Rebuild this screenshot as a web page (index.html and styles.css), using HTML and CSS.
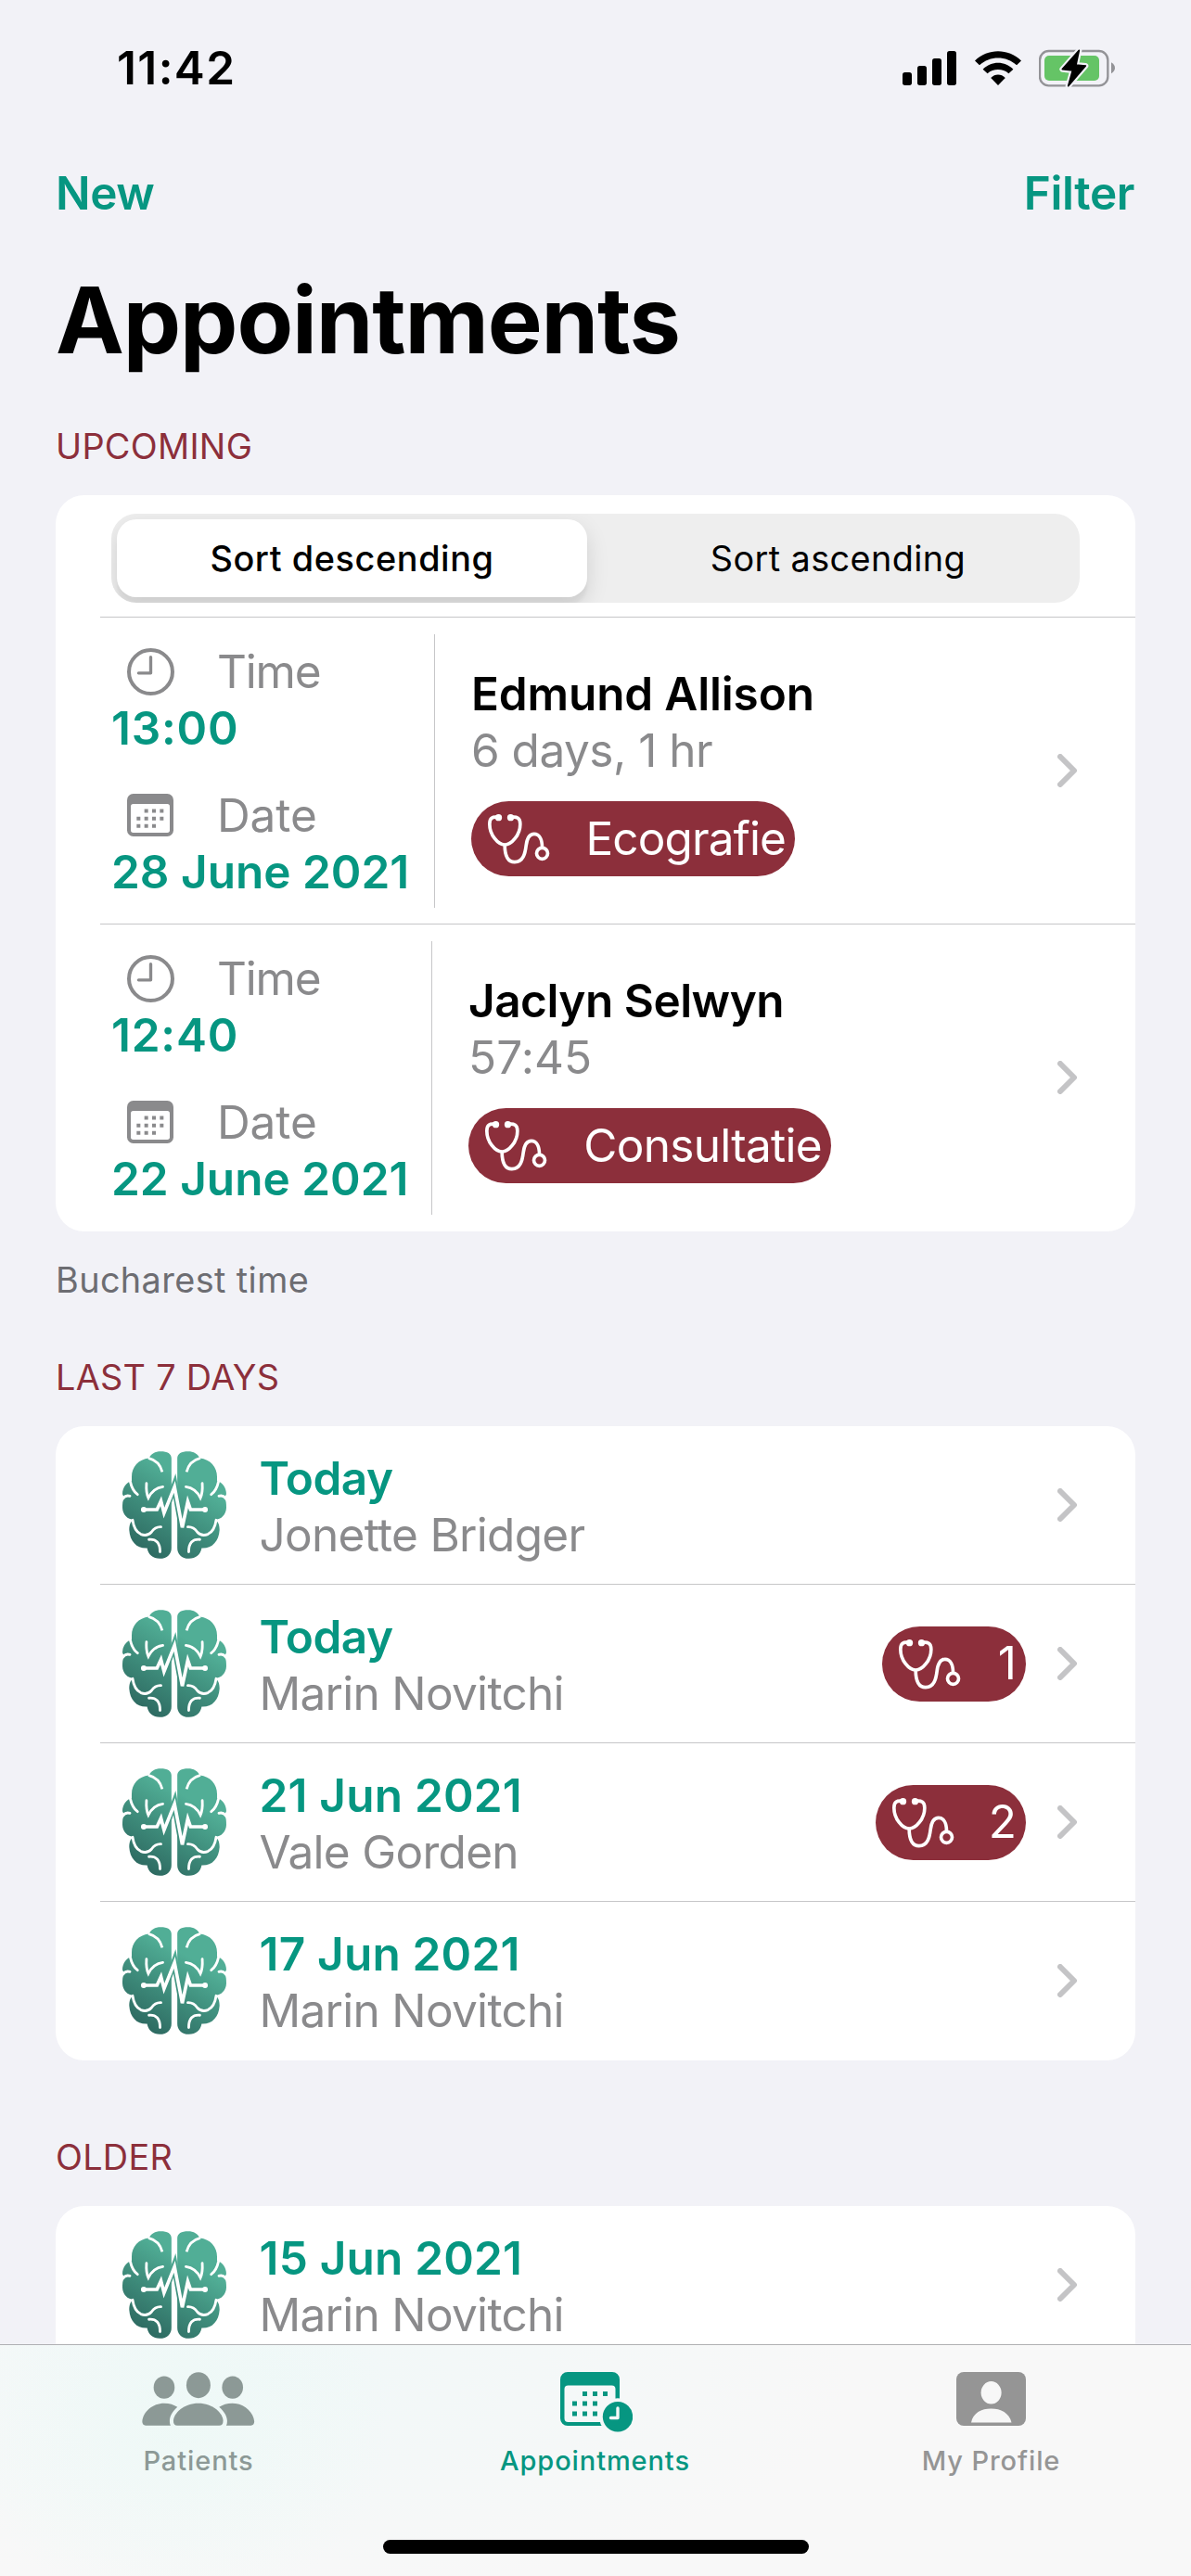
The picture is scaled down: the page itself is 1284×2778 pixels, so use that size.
FILE: index.html
```html
<!DOCTYPE html>
<html lang="en">
<head>
<meta charset="utf-8">
<title>Appointments</title>
<link rel="stylesheet" href="styles.css">
</head>
<body>
<svg class="defs" width="0" height="0" aria-hidden="true">
  <defs>
    <linearGradient id="brain-fill" gradientUnits="userSpaceOnUse" x1="140" y1="420" x2="310" y2="130">
      <stop offset="0" stop-color="#2c675f"/>
      <stop offset="0.5" stop-color="#40907e"/>
      <stop offset="0.85" stop-color="#51ae96"/>
    </linearGradient>
    <g id="brain-lines" fill="none" stroke="#fff" stroke-width="8.500" stroke-linecap="round">
      <path stroke-linecap="butt" d="M150 97Q186 106 195 142"/>
      <path d="M91 172Q98 203 115 215"/>
      <path d="M66 230Q76 215 90 220"/>
      <path d="M144 179Q142 208 150 226Q166 194 197 190"/>
      <path d="M99 298Q104 334 126 344Q146 352 160 337Q172 319 191 320"/>
      <path d="M152 361Q188 358 188 401"/>
    </g>
    <symbol id="brain" viewBox="66 75 337 348">
      <path fill="url(#brain-fill)" d="M225 98C225 82 212 75 190 75C172 75 158 83 152 97C118 101 96 125 96 158L96 171C78 176 66 194 66 214L72 226C66 236 66 246 66 258C67 280 82 296 103 297C92 302 88 314 88 330C90 368 114 391 146 389C150 410 165 423 187 423C212 423 225 408 225 388Z"/>
      <path fill="url(#brain-fill)" d="M244 98C244 82 257 75 279 75C297 75 311 83 317 97C351 101 373 125 373 158L373 171C391 176 403 194 403 214L397 226C403 236 403 246 403 258C402 280 387 296 366 297C377 302 381 314 381 330C379 368 355 391 323 389C319 410 304 423 282 423C257 423 244 408 244 388Z"/>
      <use href="#brain-lines"/>
      <use href="#brain-lines" transform="matrix(-1 0 0 1 469 0)"/>
      <path d="M201 277L235 186L260 325" fill="none" stroke="url(#brain-fill)" stroke-width="21"/>
      <path d="M136 264H178L191 236L201 275L235 190L260 322L278 238L287 264H334" fill="none" stroke="#fff" stroke-width="11"/>
      <circle cx="135" cy="264" r="9" fill="#fff"/><circle cx="334" cy="264" r="9" fill="#fff"/>
    </symbol>
    <symbol id="steth" viewBox="205 145 203 165">
      <g fill="none" stroke="#fff" stroke-width="11">
        <path d="M240 158C222 156 213 160 213 180C213 215 240 247 262 247C284 247 312 215 312 180C312 160 302 156 283 158"/>
        <path d="M262 247C262 285 272 303 294 303C322 303 328 275 331 250C334 225 342 212 357 212C374 212 383 230 383 255"/>
        <circle cx="383" cy="275" r="18"/>
      </g>
      <circle cx="242" cy="159" r="11" fill="#fff"/><circle cx="281" cy="159" r="11" fill="#fff"/>
    </symbol>
    <symbol id="clock" viewBox="51 57 152 152">
      <g fill="none" stroke="#8a8a8c"><circle cx="127" cy="133" r="70" stroke-width="12"/>
      <path d="M127 86V137H88" stroke-width="10" stroke-linecap="round" stroke-linejoin="round"/></g>
    </symbol>
    <symbol id="calendar" viewBox="51 528 150 138">
      <rect x="51" y="528" width="150" height="138" rx="20" fill="#8a8a8c"/>
      <rect x="63" y="561" width="126" height="93" rx="8" fill="#fff"/>
      <g fill="none" stroke="#8a8a8c" stroke-width="12">
        <path d="M107 583.500H176" stroke-dasharray="12 13"/>
        <path d="M82 608H176" stroke-dasharray="12 13"/>
        <path d="M82 632.500H145" stroke-dasharray="12 13"/>
      </g>
    </symbol>
    <symbol id="chevron" viewBox="0 0 22 36">
      <path d="M3 3L18 18L3 33" fill="none" stroke="#c4c4c6" stroke-width="6" stroke-linecap="round" stroke-linejoin="round"/>
    </symbol>
  </defs>
</svg>

<main class="screen">
  <div class="status">
    <span class="clock-time">11:42</span>
    <div class="status-icons">
      <svg class="signal" viewBox="39 42 174 111"><rect x="39" y="111" width="30" height="42" rx="8"/><rect x="87" y="90" width="30" height="63" rx="8"/><rect x="135" y="66" width="30" height="87" rx="8"/><rect x="183" y="42" width="30" height="111" rx="8"/></svg>
      <svg class="wifi" viewBox="271 42 151 111"><path d="M271 73C313 32 380 32 422 73L407 88C373 56 320 56 286 88Z"/><path d="M297 101C325 73 368 73 396 101L381 115C362 98 331 98 312 115Z"/><path d="M323 129C337 115.500 356 115.500 370 129L346.500 153Z"/></svg>
      <svg class="battery" viewBox="480 36 246 123">
        <rect x="483" y="42" width="220" height="112" rx="29" fill="none" stroke="#939397" stroke-width="7"/>
        <rect x="498" y="57" width="177" height="81" rx="15" fill="#65c466"/>
        <path d="M714 79Q726 86 726 97T714 115Z" fill="#939397"/>
        <path d="M610 40L556 101L589 105L575 155L631 90L600 87Z" fill="#000" stroke="#f2f2f7" stroke-width="18" stroke-linejoin="round"/>
        <path d="M610 40L556 101L589 105L575 155L631 90L600 87Z" fill="#000" stroke="#000" stroke-width="5" stroke-linejoin="round"/>
      </svg>
    </div>
  </div>
  <nav class="navbar"><a>New</a><a>Filter</a></nav>
  <h1 class="title">Appointments</h1>

  <h2 class="section-label">UPCOMING</h2>
  <section class="card">
    <div class="sort-row">
      <div class="segmented">
        <div class="segment selected">Sort descending</div>
        <div class="segment plain">Sort ascending</div>
      </div>
    </div>
    <div class="visit">
      <div class="when">
        <div class="line"><svg class="clock"><use href="#clock"/></svg><span class="body-text">Time</span></div>
        <div class="line strong time">13:00</div>
        <div class="line second"><svg class="calendar"><use href="#calendar"/></svg><span class="body-text date">Date</span></div>
        <div class="line strong">28 June 2021</div>
      </div>
      <div class="who">
        <div class="line name">Edmund Allison</div>
        <div class="line body-text remaining">6 days, 1 hr</div>
        <div class="pill"><svg class="steth"><use href="#steth"/></svg><span>Ecografie</span></div>
      </div>
      <svg class="chevron"><use href="#chevron"/></svg>
    </div>
    <div class="visit">
      <div class="when narrow">
        <div class="line"><svg class="clock"><use href="#clock"/></svg><span class="body-text">Time</span></div>
        <div class="line strong time">12:40</div>
        <div class="line second"><svg class="calendar"><use href="#calendar"/></svg><span class="body-text date">Date</span></div>
        <div class="line strong">22 June 2021</div>
      </div>
      <div class="who">
        <div class="line name tight">Jaclyn Selwyn</div>
        <div class="line body-text countdown">57:45</div>
        <div class="pill wide"><svg class="steth"><use href="#steth"/></svg><span>Consultatie</span></div>
      </div>
      <svg class="chevron"><use href="#chevron"/></svg>
    </div>
  </section>
  <p class="footnote">Bucharest time</p>

  <h2 class="section-label second-label">LAST 7 DAYS</h2>
  <section class="card list">
    <div class="row"><svg class="brain"><use href="#brain"/></svg>
      <div class="texts"><div class="line strong today">Today</div><div class="line body-text patient">Jonette Bridger</div></div>
      <svg class="chevron"><use href="#chevron"/></svg></div>
    <div class="row"><svg class="brain"><use href="#brain"/></svg>
      <div class="texts"><div class="line strong today">Today</div><div class="line body-text patient">Marin Novitchi</div></div>
      <div class="pill count one"><svg class="steth"><use href="#steth"/></svg><span>1</span></div>
      <svg class="chevron"><use href="#chevron"/></svg></div>
    <div class="row"><svg class="brain"><use href="#brain"/></svg>
      <div class="texts"><div class="line strong day">21 Jun 2021</div><div class="line body-text patient">Vale Gorden</div></div>
      <div class="pill count two"><svg class="steth"><use href="#steth"/></svg><span>2</span></div>
      <svg class="chevron"><use href="#chevron"/></svg></div>
    <div class="row"><svg class="brain"><use href="#brain"/></svg>
      <div class="texts"><div class="line strong day">17 Jun 2021</div><div class="line body-text patient">Marin Novitchi</div></div>
      <svg class="chevron"><use href="#chevron"/></svg></div>
  </section>

  <h2 class="section-label third-label">OLDER</h2>
  <section class="card list">
    <div class="row"><svg class="brain"><use href="#brain"/></svg>
      <div class="texts"><div class="line strong day">15 Jun 2021</div><div class="line body-text patient">Marin Novitchi</div></div>
      <svg class="chevron"><use href="#chevron"/></svg></div>
    <div class="row"></div>
  </section>
</main>

<footer class="tabbar">
  <div class="tabs">
    <div class="tab patients">
      <svg class="people" viewBox="68 52 365 174" fill="#8c9996">
        <ellipse cx="140" cy="102" rx="34" ry="36.500"/><ellipse cx="251" cy="94.500" rx="39" ry="42"/><ellipse cx="361.500" cy="102" rx="34" ry="36.500"/>
        <path d="M170 210C170 185 205 153 251 153S331 185 331 210C331 220 327 225 318 225H183C174 225 170 220 170 210Z"/>
        <path d="M69 212C72 180 103 153 140 153C157 153 172 158 183 165C165 180 157 198 158 213C158 218 159 222 161 225H80C73 225 69 220 69 212Z"/>
        <path d="M432 212C429 180 398 153 361 153C344 153 329 158 318 165C336 180 345 198 344 213C344 218 343 222 341 225H421C428 225 432 220 432 212Z"/>
      </svg>
      <span>Patients</span>
    </div>
    <div class="tab active">
      <svg class="appt" viewBox="0 0 78 65">
        <path fill="#069681" fill-rule="evenodd" d="M8 0H56A8 8 0 0 1 64 8V50A8 8 0 0 1 56 58H8A8 8 0 0 1 0 50V8A8 8 0 0 1 8 0ZM8.500 14.500A4 4 0 0 0 4.500 18.500V50A4 4 0 0 0 8.500 54H55.500A4 4 0 0 0 59.500 50V18.500A4 4 0 0 0 55.500 14.500Z"/>
        <circle cx="62" cy="48.300" r="20" fill="#f5f8f8"/>
        <g fill="none" stroke="#069681" stroke-width="5"><path d="M24 23.500H51" stroke-dasharray="5 6"/><path d="M13 34H40" stroke-dasharray="5 6"/><path d="M13 45H40" stroke-dasharray="5 6"/></g>
        <circle cx="62" cy="48.300" r="16.200" fill="#069681"/>
        <path d="M62 39V49.500H54.500" fill="none" stroke="#f5f8f8" stroke-width="3.400" stroke-linecap="round" stroke-linejoin="round"/>
      </svg>
      <span>Appointments</span>
    </div>
    <div class="tab profile">
      <svg class="person" viewBox="0 0 75 58">
        <rect width="75" height="58" rx="8" fill="#959595"/>
        <ellipse cx="37.600" cy="22.300" rx="11" ry="12.200" fill="#f7f7f7"/>
        <path d="M16 54.500C18 44 27 39.500 37.500 39.500S57 44 59.500 54.500Z" fill="#f7f7f7"/>
      </svg>
      <span>My Profile</span>
    </div>
  </div>
  <div class="home-indicator"></div>
</footer>
</body>
</html>
```
FILE: styles.css
```css
* { box-sizing: border-box; margin: 0; padding: 0; }

body {
  width: 1284px;
  height: 2778px;
  overflow: hidden;
  display: flex;
  flex-direction: column;
  background: #f2f2f7;
  color: #000;
  font-family: Inter, "Liberation Sans", sans-serif;
  font-size: 49.5px;
  white-space: nowrap;
}

svg { display: block; flex: none; }
.defs { height: 0; }

.screen { height: 2528px; overflow: hidden; flex: none; }

.status {
  height: 146px;
  display: flex;
  align-items: center;
  justify-content: space-between;
  padding: 0 82px 0 126px;
}
.clock-time { font-weight: 600; letter-spacing: 1.4px; }
.status-icons { display: flex; align-items: center; }
.signal { width: 58px; height: 37px; }
.wifi { width: 50px; height: 37px; margin-left: 19.5px; }
.battery { width: 82px; height: 41px; margin-left: 19.5px; }

.navbar {
  height: 124px;
  display: flex;
  align-items: center;
  justify-content: space-between;
  padding: 0 61px 0 60px;
  color: #069681;
  font-weight: 600;
  letter-spacing: -0.4px;
}

.title {
  height: 150px;
  line-height: 150px;
  padding-left: 60px;
  font-size: 99px;
  font-weight: 700;
  letter-spacing: -1.1px;
}

.section-label {
  padding: 41px 0 33px 60px;
  font-size: 37.8px;
  line-height: 40px;
  font-weight: 400;
  letter-spacing: 0.3px;
  color: #8c2f3b;
}
.second-label { padding: 65px 0 33px 60px; }
.third-label { padding: 84px 0 33px 60px; }

.card {
  margin: 0 60px;
  background: #fff;
  border-radius: 31px;
  overflow: hidden;
}

.sort-row { height: 131px; padding: 20px 60px 0; }
.segmented {
  height: 96px;
  display: grid;
  grid-template-columns: 507px 1fr;
  padding: 6px;
  border-radius: 27px;
  background: #eee;
  overflow: hidden;
  font-size: 37.8px;
}
.segment { display: flex; align-items: center; justify-content: center; }
.segment.selected {
  background: #fff;
  border-radius: 21px;
  font-weight: 500;
  letter-spacing: 0.6px;
  box-shadow: 0 9px 24px rgba(0, 0, 0, 0.12), 0 9px 3px rgba(0, 0, 0, 0.04);
}
.segment.plain { padding-left: 16px; letter-spacing: 0.4px; }

.visit {
  height: 331px;
  margin-left: 48px;
  border-top: 1px solid #c6c6c8;
  display: flex;
}
.visit:last-child { height: 332px; padding-bottom: 1px; }
.when {
  width: 361px;
  height: 295px;
  margin-top: 18px;
  padding: 9.5px 0 0 12px;
  border-right: 1px solid #c6c6c8;
}
.when.narrow { width: 358px; }
.line { height: 61px; line-height: 61px; display: flex; align-items: center; }
.line.second { margin-top: 33px; }
.clock { width: 51px; height: 51px; margin: 0 46px 0 17px; }
.calendar { width: 50px; height: 46px; margin: 0 47px 0 17px; }
.body-text { color: #8a8a8c; letter-spacing: -1.2px; }
.body-text.date { letter-spacing: -0.1px; }
.body-text.remaining { letter-spacing: -0.5px; }
.body-text.countdown { letter-spacing: 0.1px; }
.body-text.patient { letter-spacing: -0.7px; }
.strong { color: #069681; font-weight: 600; letter-spacing: 0; }
.strong.time { letter-spacing: 0.8px; }
.strong.today { letter-spacing: -0.5px; }
.strong.day { letter-spacing: 0.2px; }
.name { font-weight: 600; letter-spacing: -0.15px; }
.name.tight { letter-spacing: -0.5px; }

.who { padding: 52px 0 0 39px; flex: 1; }

.pill {
  width: 349px;
  height: 81px;
  margin-top: 24px;
  padding: 0 10px 0 17px;
  display: flex;
  align-items: center;
  justify-content: space-between;
  border-radius: 41px;
  background: #8c2f3b;
  color: #fff;
  letter-spacing: -0.9px;
}
.pill span { padding-bottom: 2px; }
.pill.wide { width: 391px; letter-spacing: -0.7px; }
.steth { width: 68px; height: 55px; }

.chevron { width: 22px; height: 36px; align-self: center; margin-right: 62.5px; }

.row {
  height: 171px;
  margin-left: 48px;
  border-top: 1px solid #c6c6c8;
  display: flex;
  align-items: center;
}
.row:first-child { height: 170px; border-top: 0; }
.row:last-child { height: 172px; padding-bottom: 1px; }
.brain { width: 112px; height: 116px; margin-left: 24px; }
.texts { flex: 1; margin-left: 35.5px; padding-top: 3px; }

.pill.count { margin: 0 34px 0 0; padding-right: 10.5px; }
.pill.one { width: 155px; }
.pill.two { width: 162px; }

.footnote {
  padding: 32px 0 0 60px;
  font-size: 37.8px;
  line-height: 40px;
  letter-spacing: 0.4px;
  color: #6d6d72;
}

.tabbar {
  height: 250px;
  flex: none;
  border-top: 1px solid #b0b0b3;
  background:
    radial-gradient(ellipse 230px 210px at 190px 80px, rgba(236, 249, 246, 0.7), rgba(236, 249, 246, 0)),
    radial-gradient(ellipse 620px 240px at 300px 30px, rgba(240, 248, 248, 0.9), rgba(248, 248, 248, 0)),
    #f8f8f8;
}
.tabs { height: 210px; display: grid; grid-template-columns: repeat(3, 428px); }
.tab {
  display: flex;
  flex-direction: column;
  align-items: center;
  padding-top: 29px;
  font-size: 29px;
  font-weight: 500;
  letter-spacing: 0.9px;
  color: #959595;
}
.tab span { line-height: 36px; }
.tab.patients { color: #8c9996; }
.tab.active { color: #069681; padding-right: 1px; }
.tab.profile { padding-right: 3px; }
.people { width: 121.5px; height: 58px; margin-bottom: 20px; }
.appt { width: 78px; height: 65px; margin: 0 0 13px 2px; }
.person { width: 75px; height: 58px; margin-bottom: 20px; }
.home-indicator {
  width: 459px;
  height: 15px;
  margin: 0 auto;
  border-radius: 8px;
  background: #000;
}
```
